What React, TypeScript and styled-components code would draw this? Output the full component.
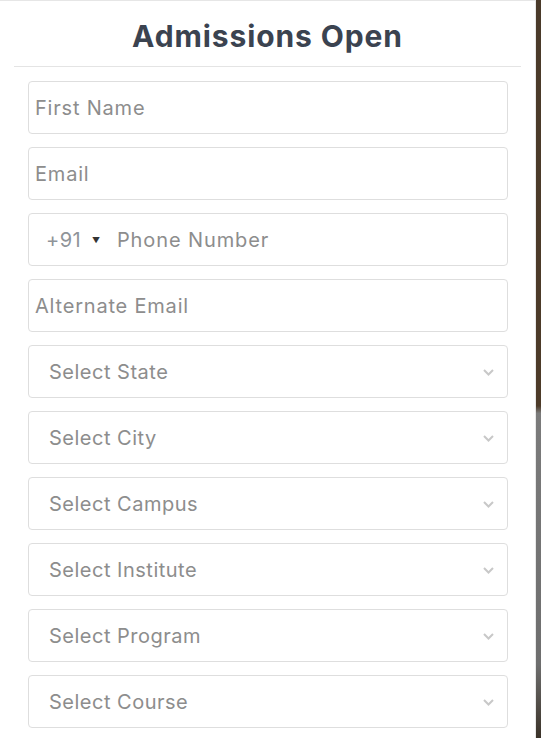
import React from 'react'
import styled, { createGlobalStyle } from 'styled-components'

const GlobalStyle = createGlobalStyle`
  html, body {
    margin: 0;
    padding: 0;
  }
  body {
    background: linear-gradient(180deg, #4a3a2a 0%, #4d3b29 55%, #7b7b7b 56%, #6e6e6e 90%, #3a3228 100%);
    font-family: Inter, "Noto Sans", sans-serif;
  }
`

const Panel = styled.div`
  width: 536px;
  height: 738px;
  box-sizing: border-box;
  background: #fff;
  border-top: 1px solid #e6e6e6;
  border-right: 1px solid #e8e8e8;
  overflow: hidden;
`

const Title = styled.h2`
  margin: 0 14px;
  padding: 17px 0 11px;
  text-align: center;
  font-family: Inter, "Noto Sans", sans-serif;
  font-size: 30px;
  line-height: 37px;
  font-weight: 700;
  letter-spacing: 0.9px;
  color: #3b4350;
  border-bottom: 1px solid #e4e4e4;
`

const Form = styled.form`
  display: flex;
  flex-direction: column;
  gap: 13px;
  padding: 14px 0 0 28px;
`

const fieldBase = `
  box-sizing: border-box;
  width: 480px;
  height: 53px;
  border: 1px solid #dedede;
  border-radius: 4px;
  background: #fff;
  font-family: Inter, "Noto Sans", sans-serif;
  font-size: 20px;
  letter-spacing: 0.8px;
  color: #8a8a8a;
  outline: none;
`

const TextInput = styled.input`
  ${fieldBase}
  padding: 1px 0 0 6px;
  &::placeholder {
    color: #8d8d8d;
  }
`

const PhoneBox = styled.div`
  ${fieldBase}
  display: flex;
  align-items: center;
  padding: 1px 0 0 17px;
`

const Dial = styled.span`
  color: #8f9499;
  font-size: 20px;
  letter-spacing: 0.4px;
`

const Caret = styled.span`
  margin: 0 16px 0 11px;
  font-size: 8px;
  color: #333;
`

const PhoneInput = styled.input`
  flex: 1;
  border: none;
  outline: none;
  padding: 0;
  font-family: inherit;
  font-size: 20px;
  letter-spacing: 0.9px;
  background: transparent;
  &::placeholder {
    color: #8d8d8d;
  }
`

const SelectWrap = styled.div`
  ${fieldBase}
  position: relative;
`

const Select = styled.select`
  appearance: none;
  width: 100%;
  height: 100%;
  border: none;
  background: transparent;
  padding: 1px 0 0 20px;
  font-family: inherit;
  font-size: 20px;
  letter-spacing: 0.5px;
  color: #8d8d8d;
  outline: none;
`

const Chevron = styled.svg`
  position: absolute;
  right: 13px;
  top: 50%;
  margin-top: -3px;
  pointer-events: none;
`

const selects = [
  'Select State',
  'Select City',
  'Select Campus',
  'Select Institute',
  'Select Program',
  'Select Course',
]

const App = () => {
  return (
    <>
      <GlobalStyle />
      <Panel>
        <Title>Admissions Open</Title>
        <Form onSubmit={(e) => e.preventDefault()}>
          <TextInput placeholder="First Name" />
          <TextInput placeholder="Email" />
          <PhoneBox>
            <Dial>+91</Dial>
            <Caret>▼</Caret>
            <PhoneInput placeholder="Phone Number" />
          </PhoneBox>
          <TextInput placeholder="Alternate Email" />
          {selects.map((label) => (
            <SelectWrap key={label}>
              <Select defaultValue="">
                <option value="">{label}</option>
              </Select>
              <Chevron width="11" height="7" viewBox="0 0 11 7">
                <path d="M1 1 L5.5 5.5 L10 1" fill="none" stroke="#c8c8c8" strokeWidth="2" />
              </Chevron>
            </SelectWrap>
          ))}
        </Form>
      </Panel>
    </>
  )
}

export default App
